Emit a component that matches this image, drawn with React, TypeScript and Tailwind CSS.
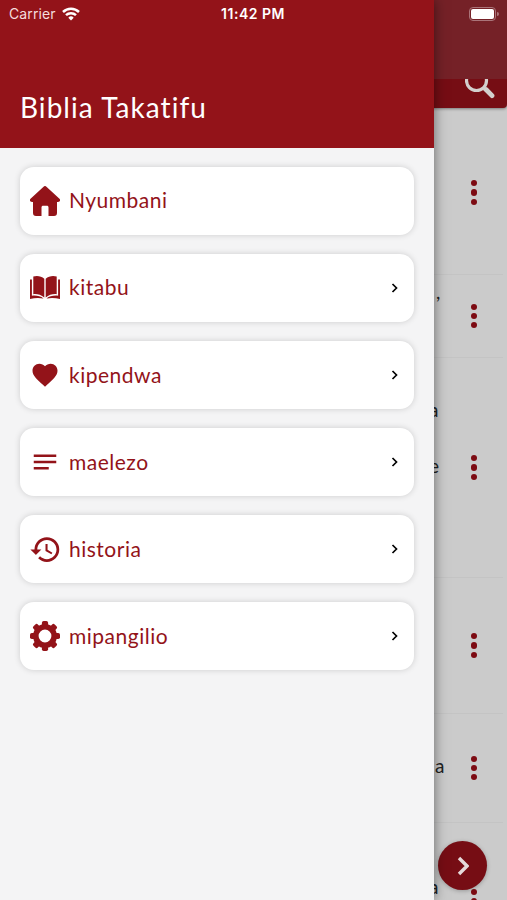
import { MdFavorite, MdHistory, MdNotes } from 'react-icons/md'
import type { ReactNode } from 'react'

function HomeIcon() {
  return (
    <svg width="30" height="30" viewBox="0 0 30 30" fill="currentColor">
      <path d="M13.300.9a2.500 2.500 0 0 1 3.400 0L29.200 12.400c1.600 1.500 1 3.600-1.200 3.600h-1v10.800c0 2.200-1 3.200-3 3.200h-5.500v-8.500c0-1.100-.6-1.700-1.700-1.700h-3.600c-1.100 0-1.700.6-1.700 1.700V30H6c-2 0-3-1-3-3.200V16H2c-2.200 0-2.800-2.100-1.200-3.600z" />
    </svg>
  )
}

function BookIcon() {
  return (
    <svg width="30" height="23" viewBox="0 0 30 23" fill="currentColor">
      <path d="M3.300.6C7-.6 11.500.2 14.300 2.700v18.900C11 18.700 7 17.800 3.300 18.200z" />
      <path d="M26.700.6C23-.6 18.500.2 15.700 2.700v18.900C19 18.700 23 17.800 26.700 18.200z" />
      <path d="M0 3.500h1.900v16.200c4.500-.4 8.600.3 11.600 2.900C9 21.700 4.500 22 0 23zM30 3.500h-1.900v16.200c-4.500-.4-8.600.3-11.600 2.900 4.500-.9 9-.6 13.500.4z" />
    </svg>
  )
}

const teeth = [0, 45, 90, 135, 180, 225, 270, 315]

function GearIcon() {
  return (
    <svg width="30" height="30" viewBox="0 0 30 30" fill="currentColor">
      <circle cx="15" cy="15" r="9.200" fill="none" stroke="currentColor" strokeWidth="5.600" />
      {teeth.map((angle) => (
        <rect key={angle} x="11.900" y="0" width="6.200" height="6" rx="1.800" transform={`rotate(${angle} 15 15)`} />
      ))}
    </svg>
  )
}

function Chevron({ className }: { className: string }) {
  return (
    <svg className={className} viewBox="0 0 6 10" fill="none" stroke="currentColor" strokeWidth="1.700">
      <path d="M1 1l4 4-4 4" />
    </svg>
  )
}

function Dots() {
  return (
    <div className="flex flex-col gap-[3px] text-[#7d0b13]">
      <span className="size-[6.300px] rounded-full bg-current" />
      <span className="size-[6.300px] rounded-full bg-current" />
      <span className="size-[6.300px] rounded-full bg-current" />
    </div>
  )
}

function VerseRow({ className, children }: { className: string; children?: ReactNode }) {
  return (
    <div className={`mr-1 flex shrink-0 items-center border-b border-[#c4c4c4] ${className}`}>
      <div className="w-[470.500px] pl-[429px] text-[19px] leading-[28.300px] text-[#222]">{children}</div>
      <Dots />
    </div>
  )
}

const menu = [
  { label: 'Nyumbani', icon: <HomeIcon />, arrow: false },
  { label: 'kitabu', icon: <BookIcon />, arrow: true },
  { label: 'kipendwa', icon: <MdFavorite size={30} className="shrink-0" />, arrow: true },
  { label: 'maelezo', icon: <MdNotes size={30} className="shrink-0" />, arrow: true },
  { label: 'historia', icon: <MdHistory size={33} className="shrink-0" />, arrow: true },
  { label: 'mipangilio', icon: <GearIcon />, arrow: true },
]

function Drawer() {
  return (
    <aside className="absolute inset-y-0 left-0 w-[434px] bg-[#f4f4f5] shadow-[0_0_12px_rgba(0,0,0,0.500)]">
      <div className="flex h-[147.500px] items-end bg-[#931319] pb-[23px] pl-5">
        <h1 className="text-[28px] leading-9 tracking-[1.050px] text-white">Biblia Takatifu</h1>
      </div>
      <nav className="flex flex-col gap-[19.200px] px-5 pt-[19px]">
        {menu.map((item) => (
          <div
            key={item.label}
            className="flex h-[68px] items-center rounded-[14px] bg-white pr-4 pl-[7px] text-[#931319] shadow-[0_0_6px_rgba(0,0,0,0.160)]"
          >
            <span className="flex w-9 items-center justify-center">{item.icon}</span>
            <span className="-mt-px ml-1.5 flex-1 text-[21px] tracking-[0.500px]">{item.label}</span>
            {item.arrow && <Chevron className="h-[10px] w-[7px] text-black" />}
          </div>
        ))}
      </nav>
    </aside>
  )
}

function StatusBar() {
  return (
    <div className="absolute inset-x-0 top-0 flex h-[27px] items-center justify-between pr-[8px] pl-[9px] font-['Inter',sans-serif] text-white">
      <div className="flex w-[200px] items-center gap-1.5 text-[14px] tracking-[0.100px] text-[#f5dcdd]">
        Carrier
        <svg width="18" height="14" viewBox="0 0 18 14" fill="none" stroke="white" strokeWidth="2.500">
          <path d="M1 5a11.500 11.500 0 0 1 16 0M4 8.200a7.200 7.200 0 0 1 10 0" />
          <path d="M9 13.500L6.300 10.700a3.800 3.800 0 0 1 5.400 0z" fill="white" stroke="none" />
        </svg>
      </div>
      <span className="text-[14px] font-semibold tracking-[0.500px]">11:42 PM</span>
      <div className="flex w-[202px] items-center justify-end gap-px">
        <span className="flex h-[14px] w-[27px] rounded-[4px] border border-[#aa7479] p-px">
          <span className="flex-1 rounded-[2px] bg-white" />
        </span>
        <span className="h-1 w-[1.500px] rounded-r bg-[#aa7479]" />
      </div>
    </div>
  )
}

export default function App() {
  return (
    <div className="relative h-[900px] w-[507px] overflow-hidden bg-[#cbcbcb] font-['Lato',sans-serif]">
      <main className="flex h-full flex-col">
        <header className="h-[108px] shrink-0 overflow-hidden rounded-br-[4px] bg-[#760d14] shadow-[0_1px_3px_rgba(0,0,0,0.400)]">
          <div className="h-[79px] bg-[#752127]" />
          <div className="flex h-[29px] items-start justify-end overflow-hidden pr-3">
            <svg width="30" height="21" viewBox="0 0 30 21" fill="none" stroke="#d3cfcd">
              <circle cx="11.500" cy="1.500" r="10" strokeWidth="3.200" />
              <path d="M19 9.500l1.500 1.500" strokeWidth="3.200" />
              <path d="M21 10.500l6 6.200" strokeWidth="4.800" strokeLinecap="round" />
            </svg>
          </div>
        </header>
        <VerseRow className="h-[167px] pt-[3px]">
          <p className="pt-[108px] pl-px">.</p>
        </VerseRow>
        <VerseRow className="h-[83px]">
          <p className="-mt-[38px] pl-[7px]">,</p>
        </VerseRow>
        <VerseRow className="h-[220px]">
          <p className="pt-[26px]">a</p>
          <p className="pt-[28px]">e</p>
          <p className="pt-[56px] pl-px">.</p>
        </VerseRow>
        <VerseRow className="h-[136px]">
          <p className="pt-[81px] pl-px">.</p>
        </VerseRow>
        <VerseRow className="h-[109px]">
          <p className="-mt-1 pl-[6px]">a</p>
        </VerseRow>
        <VerseRow className="h-[157px]">
          <p className="-mt-[27px]">a</p>
        </VerseRow>
      </main>
      <button className="absolute top-[841px] left-[438px] flex size-[49px] items-center justify-center rounded-full bg-[#760d14] text-[#e5dada] shadow-[0_1px_4px_rgba(0,0,0,0.250)]">
        <Chevron className="h-5 w-3" />
      </button>
      <Drawer />
      <StatusBar />
    </div>
  )
}
